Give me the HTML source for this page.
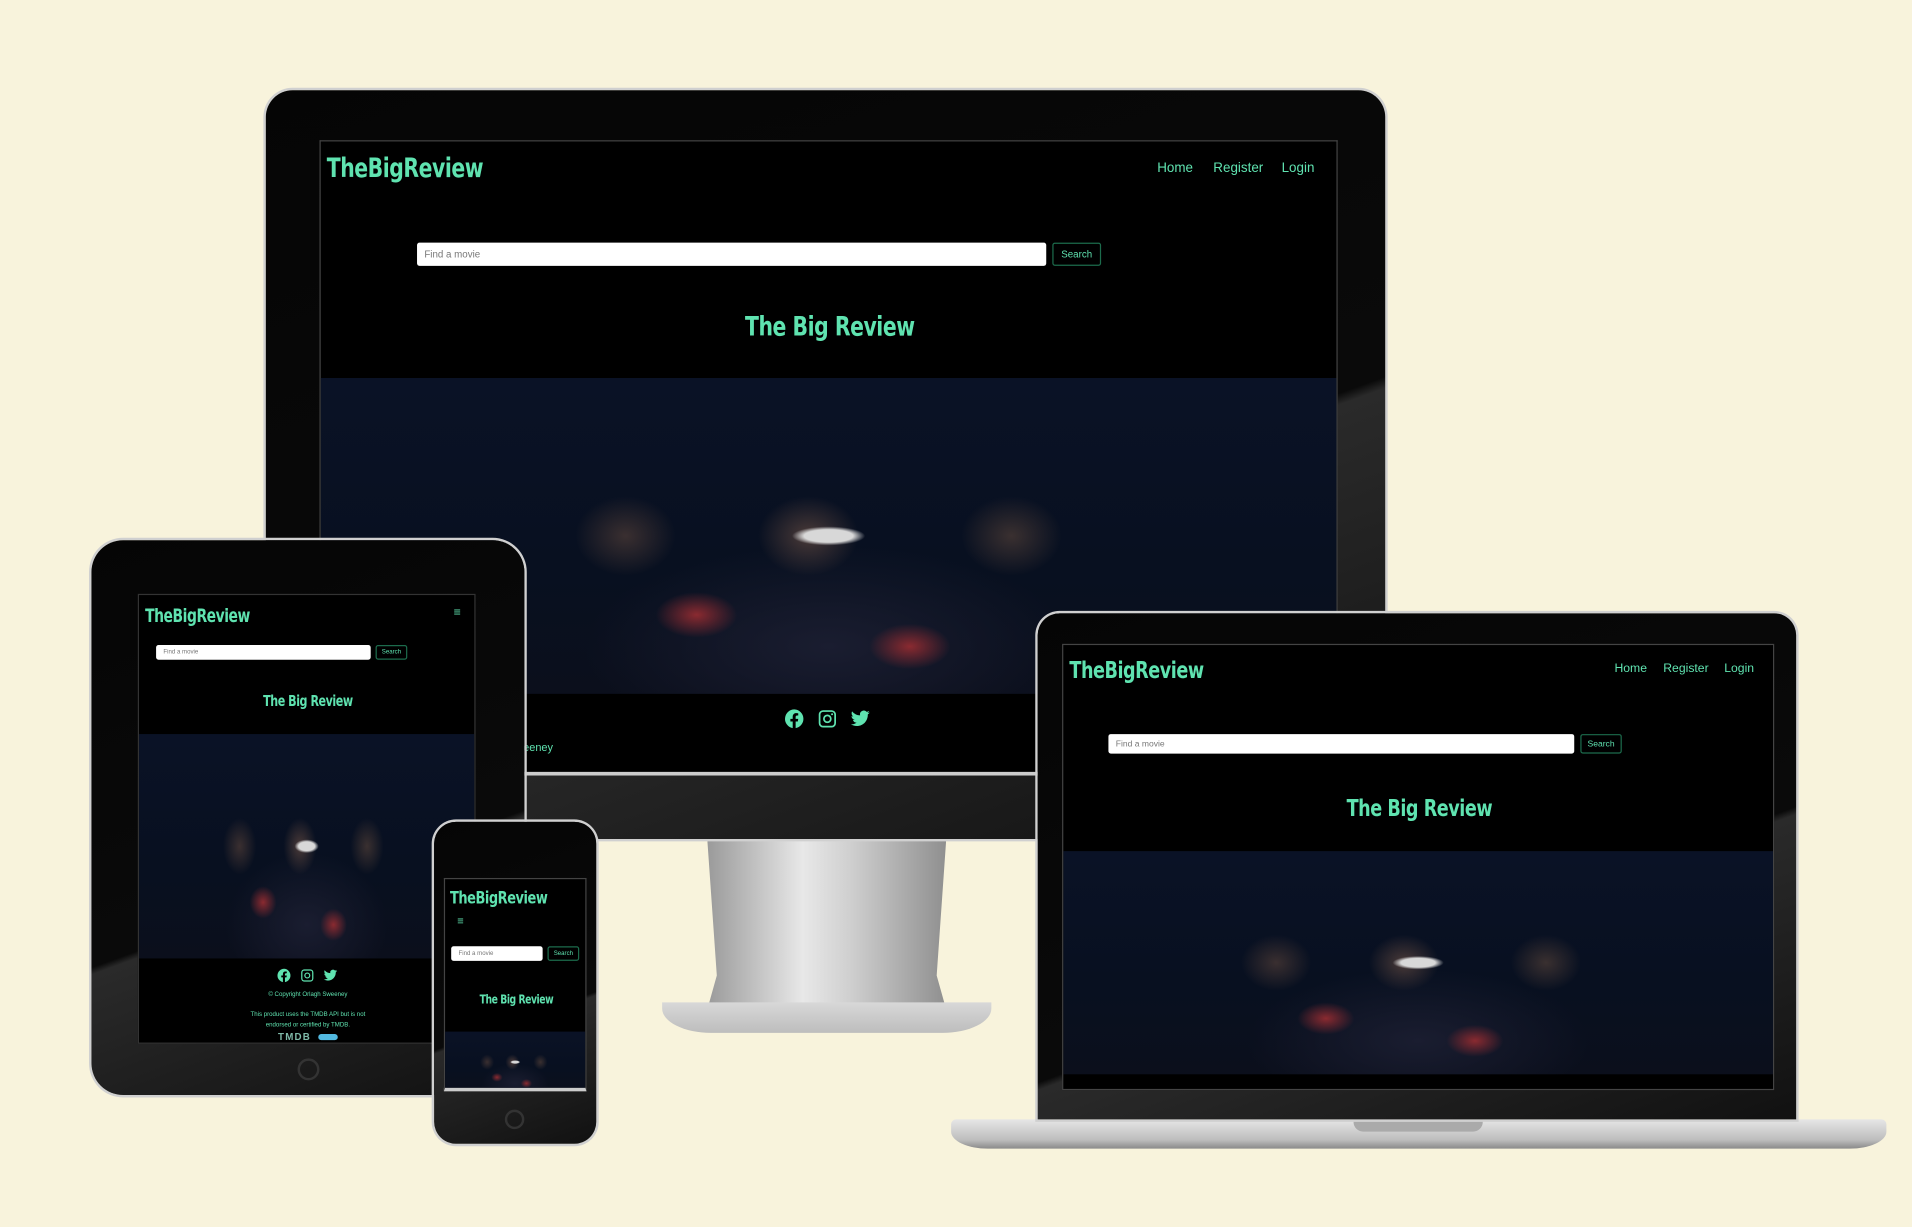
<!DOCTYPE html>
<html><head><meta charset="utf-8"><style>
*{margin:0;padding:0;box-sizing:border-box}
html,body{width:1912px;height:1227px;overflow:hidden;background:#f8f3dc}
#s{position:absolute;left:0;top:0;width:1568px;height:1006px;transform:scale(1.21939);transform-origin:0 0;font-family:"Liberation Sans",sans-serif}
.a{position:absolute}
.bez{background:linear-gradient(160deg,#050505 0%,#0a0a0a 60%,#2a2a2a 61%,#111 100%);box-shadow:0 0 0 2px #d0d0d0}
.scr{background:#000;overflow:hidden;border:1px solid #444}
.logo{position:absolute;font-family:"DejaVu Sans",sans-serif;font-weight:bold;color:#5fe3b0;transform:scaleX(.76);transform-origin:0 50%;white-space:nowrap;letter-spacing:-.5px}
.ctr{transform-origin:50% 50%}
.nav{position:absolute;color:#5fe3b0;font-size:11px}
.inp{position:absolute;background:#fff;border-radius:2px;color:#777;font-size:8px;padding-left:6px;display:flex;align-items:center}
.btn{position:absolute;border:1px solid #1c6b4c;border-radius:2px;color:#5fe3b0;font-size:8px;display:flex;align-items:center;justify-content:center}
.img{position:absolute;left:0;right:0;overflow:hidden;background:
radial-gradient(ellipse 6% 5% at 50% 50%,#d8d8d8 0,#d8d8d8 40%,transparent 60%),
radial-gradient(ellipse 5% 9% at 37% 75%,#8a2a30 0,transparent 80%),
radial-gradient(ellipse 5% 9% at 58% 85%,#8a2a30 0,transparent 80%),
radial-gradient(ellipse 7% 18% at 30% 50%,#3a2f30 0,transparent 70%),
radial-gradient(ellipse 7% 18% at 48% 50%,#4a3a38 0,transparent 70%),
radial-gradient(ellipse 7% 18% at 68% 50%,#3a3030 0,transparent 70%),
radial-gradient(ellipse 30% 40% at 50% 85%,#1a1d30 0,transparent 80%),
linear-gradient(#0a1226,#081020 60%,#0b0f1c)}
.ic{position:absolute;display:flex;gap:10px}
.ic svg{fill:#5fe3b0}
</style></head><body><div id="s">

<!-- monitor -->
<div class="a" style="left:580px;top:688px;width:196px;height:140px;background:linear-gradient(90deg,#9a9a9a,#e8e8e8 40%,#cfcfcf 60%,#8f8f8f);clip-path:polygon(0 0,100% 0,96% 80%,100% 100%,0 100%,4% 80%)"></div>
<div class="a" style="left:543px;top:822px;width:270px;height:25px;background:linear-gradient(#d8d8d8,#bdbdbd);border-radius:0 0 40px 40px/0 0 20px 20px"></div>
<div class="a bez" style="left:218px;top:74px;width:918px;height:614px;border-radius:22px 22px 0 0"></div>
<div class="a scr" style="left:262px;top:115px;width:835px;height:521px;border-bottom:3px solid #ccc">
 <div class="logo" style="left:5px;top:10px;font-size:22px">TheBigReview</div>
 <div class="nav" style="left:686px;top:16px">Home</div>
 <div class="nav" style="left:732px;top:16px">Register</div>
 <div class="nav" style="left:788px;top:16px">Login</div>
 <div class="inp" style="left:79px;top:83px;width:516px;height:19px">Find a movie</div>
 <div class="btn" style="left:600px;top:83px;width:40px;height:19px">Search</div>
 <div class="logo ctr" style="left:0;width:835px;text-align:center;top:140px;font-size:22px">The Big Review</div>
 <div class="img" style="top:194px;height:259px"></div>
 <div class="ic" style="left:380px;top:465px"><svg width="17" height="17" viewBox="0 0 24 24"><path d="M12 1a11 11 0 0 0-2 21.8v-7.7H7.3V12H10V9.6c0-2.7 1.6-4.2 4-4.2 1.2 0 2.4.2 2.4.2v2.6h-1.3c-1.3 0-1.7.8-1.7 1.7V12h3l-.5 3.1h-2.5v7.7A11 11 0 0 0 12 1z"/></svg><svg width="17" height="17" viewBox="0 0 24 24"><path d="M7 2h10a5 5 0 0 1 5 5v10a5 5 0 0 1-5 5H7a5 5 0 0 1-5-5V7a5 5 0 0 1 5-5zm0 2a3 3 0 0 0-3 3v10a3 3 0 0 0 3 3h10a3 3 0 0 0 3-3V7a3 3 0 0 0-3-3zm5 3a5 5 0 1 1 0 10 5 5 0 0 1 0-10zm0 2a3 3 0 1 0 0 6 3 3 0 0 0 0-6zm5.5-3.5a1.2 1.2 0 1 1 0 2.4 1.2 1.2 0 0 1 0-2.4z"/></svg><svg width="17" height="17" viewBox="0 0 24 24"><path d="M23 4.6a9 9 0 0 1-2.6.7 4.5 4.5 0 0 0 2-2.5 9 9 0 0 1-2.9 1.1A4.5 4.5 0 0 0 11.8 8 12.8 12.8 0 0 1 2.5 3.3a4.5 4.5 0 0 0 1.4 6 4.5 4.5 0 0 1-2-.6v.1a4.5 4.5 0 0 0 3.6 4.4 4.5 4.5 0 0 1-2 .1 4.5 4.5 0 0 0 4.2 3.1A9 9 0 0 1 1 18.3 12.8 12.8 0 0 0 7.9 20.3c8.3 0 12.8-6.9 12.8-12.8v-.6A9 9 0 0 0 23 4.6z"/></svg></div>
 <div class="nav" style="left:166px;top:492px;font-size:9px">eeney</div>
</div>

<!-- laptop -->
<div class="a" style="left:780px;top:918px;width:767px;height:24px;background:linear-gradient(#e6e6e6,#bdbdbd 70%,#8a8a8a);border-radius:4px 4px 30px 30px/4px 4px 14px 14px"></div>
<div class="a" style="left:1110px;top:918px;width:106px;height:10px;background:#aaa;border-radius:0 0 8px 8px"></div>
<div class="a bez" style="left:851px;top:503px;width:622px;height:415px;border-radius:18px 18px 0 0"></div>
<div class="a scr" style="left:871px;top:528px;width:584px;height:366px">
 <div class="logo" style="left:5px;top:10px;font-size:19px">TheBigReview</div>
 <div class="nav" style="left:452px;top:14px;font-size:10px">Home</div>
 <div class="nav" style="left:492px;top:14px;font-size:10px">Register</div>
 <div class="nav" style="left:542px;top:14px;font-size:10px">Login</div>
 <div class="inp" style="left:37px;top:73px;width:382px;height:16px;font-size:7px">Find a movie</div>
 <div class="btn" style="left:424px;top:73px;width:34px;height:16px;font-size:7px">Search</div>
 <div class="logo ctr" style="left:0;width:584px;text-align:center;top:123px;font-size:19px">The Big Review</div>
 <div class="img" style="top:169px;height:183px"></div>
</div>

<!-- tablet -->
<div class="a bez" style="left:75px;top:443px;width:355px;height:455px;border-radius:26px"></div>
<div class="a" style="left:244px;top:868px;width:18px;height:18px;border:2px solid #333;border-radius:50%"></div>
<div class="a scr" style="left:113px;top:487px;width:277px;height:369px;border-color:#333">
 <div class="logo" style="left:5px;top:8px;font-size:15px">TheBigReview</div>
 <div class="nav" style="left:258px;top:9px;font-size:10px">≡</div>
 <div class="inp" style="left:14px;top:41px;width:176px;height:12px;font-size:5px">Find a movie</div>
 <div class="btn" style="left:194px;top:41px;width:26px;height:12px;font-size:5px">Search</div>
 <div class="logo ctr" style="left:0;width:277px;text-align:center;top:80px;font-size:12px">The Big Review</div>
 <div class="img" style="top:114px;height:184px"></div>
 <div class="ic" style="left:113px;top:306px;gap:7px"><svg width="12" height="12" viewBox="0 0 24 24"><path d="M12 1a11 11 0 0 0-2 21.8v-7.7H7.3V12H10V9.6c0-2.7 1.6-4.2 4-4.2 1.2 0 2.4.2 2.4.2v2.6h-1.3c-1.3 0-1.7.8-1.7 1.7V12h3l-.5 3.1h-2.5v7.7A11 11 0 0 0 12 1z"/></svg><svg width="12" height="12" viewBox="0 0 24 24"><path d="M7 2h10a5 5 0 0 1 5 5v10a5 5 0 0 1-5 5H7a5 5 0 0 1-5-5V7a5 5 0 0 1 5-5zm0 2a3 3 0 0 0-3 3v10a3 3 0 0 0 3 3h10a3 3 0 0 0 3-3V7a3 3 0 0 0-3-3zm5 3a5 5 0 1 1 0 10 5 5 0 0 1 0-10zm0 2a3 3 0 1 0 0 6 3 3 0 0 0 0-6z"/></svg><svg width="12" height="12" viewBox="0 0 24 24"><path d="M23 4.6a9 9 0 0 1-2.6.7 4.5 4.5 0 0 0 2-2.5 9 9 0 0 1-2.9 1.1A4.5 4.5 0 0 0 11.8 8 12.8 12.8 0 0 1 2.5 3.3a4.5 4.5 0 0 0 1.4 6 4.5 4.5 0 0 1-2-.6 4.5 4.5 0 0 0 3.6 4.4 4.5 4.5 0 0 1-2 .1 4.5 4.5 0 0 0 4.2 3.1A9 9 0 0 1 1 18.3 12.8 12.8 0 0 0 7.9 20.3c8.3 0 12.8-6.9 12.8-12.8v-.6A9 9 0 0 0 23 4.6z"/></svg></div>
 <div class="nav" style="left:0;width:277px;text-align:center;top:325px;font-size:5px">© Copyright Orlagh Sweeney</div>
 <div class="nav" style="left:0;width:277px;text-align:center;top:340px;font-size:5px;line-height:9px">This product uses the TMDB API but is not<br>endorsed or certified by TMDB.</div>
 <div class="a" style="left:114px;top:358px;font-size:8px;font-weight:bold;color:#7fb9a8;letter-spacing:1px">TMDB</div>
 <div class="a" style="left:147px;top:360px;width:16px;height:5px;border-radius:3px;background:#52b9e0"></div>
</div>

<!-- phone -->
<div class="a bez" style="left:356px;top:674px;width:133px;height:264px;border-radius:18px"></div>
<div class="a" style="left:414px;top:910px;width:16px;height:16px;border:2px solid #333;border-radius:50%"></div>
<div class="a scr" style="left:364px;top:720px;width:117px;height:175px;border-bottom:3px solid #ccc">
 <div class="logo" style="left:4px;top:8px;font-size:14px">TheBigReview</div>
 <div class="nav" style="left:10px;top:29px;font-size:9px">≡</div>
 <div class="inp" style="left:5px;top:55px;width:75px;height:12px;font-size:5px">Find a movie</div>
 <div class="btn" style="left:84px;top:55px;width:26px;height:12px;font-size:5px">Search</div>
 <div class="logo ctr" style="left:0;width:117px;text-align:center;top:94px;font-size:10px">The Big Review</div>
 <div class="img" style="top:125px;height:50px"></div>
</div>

</div></body></html>
